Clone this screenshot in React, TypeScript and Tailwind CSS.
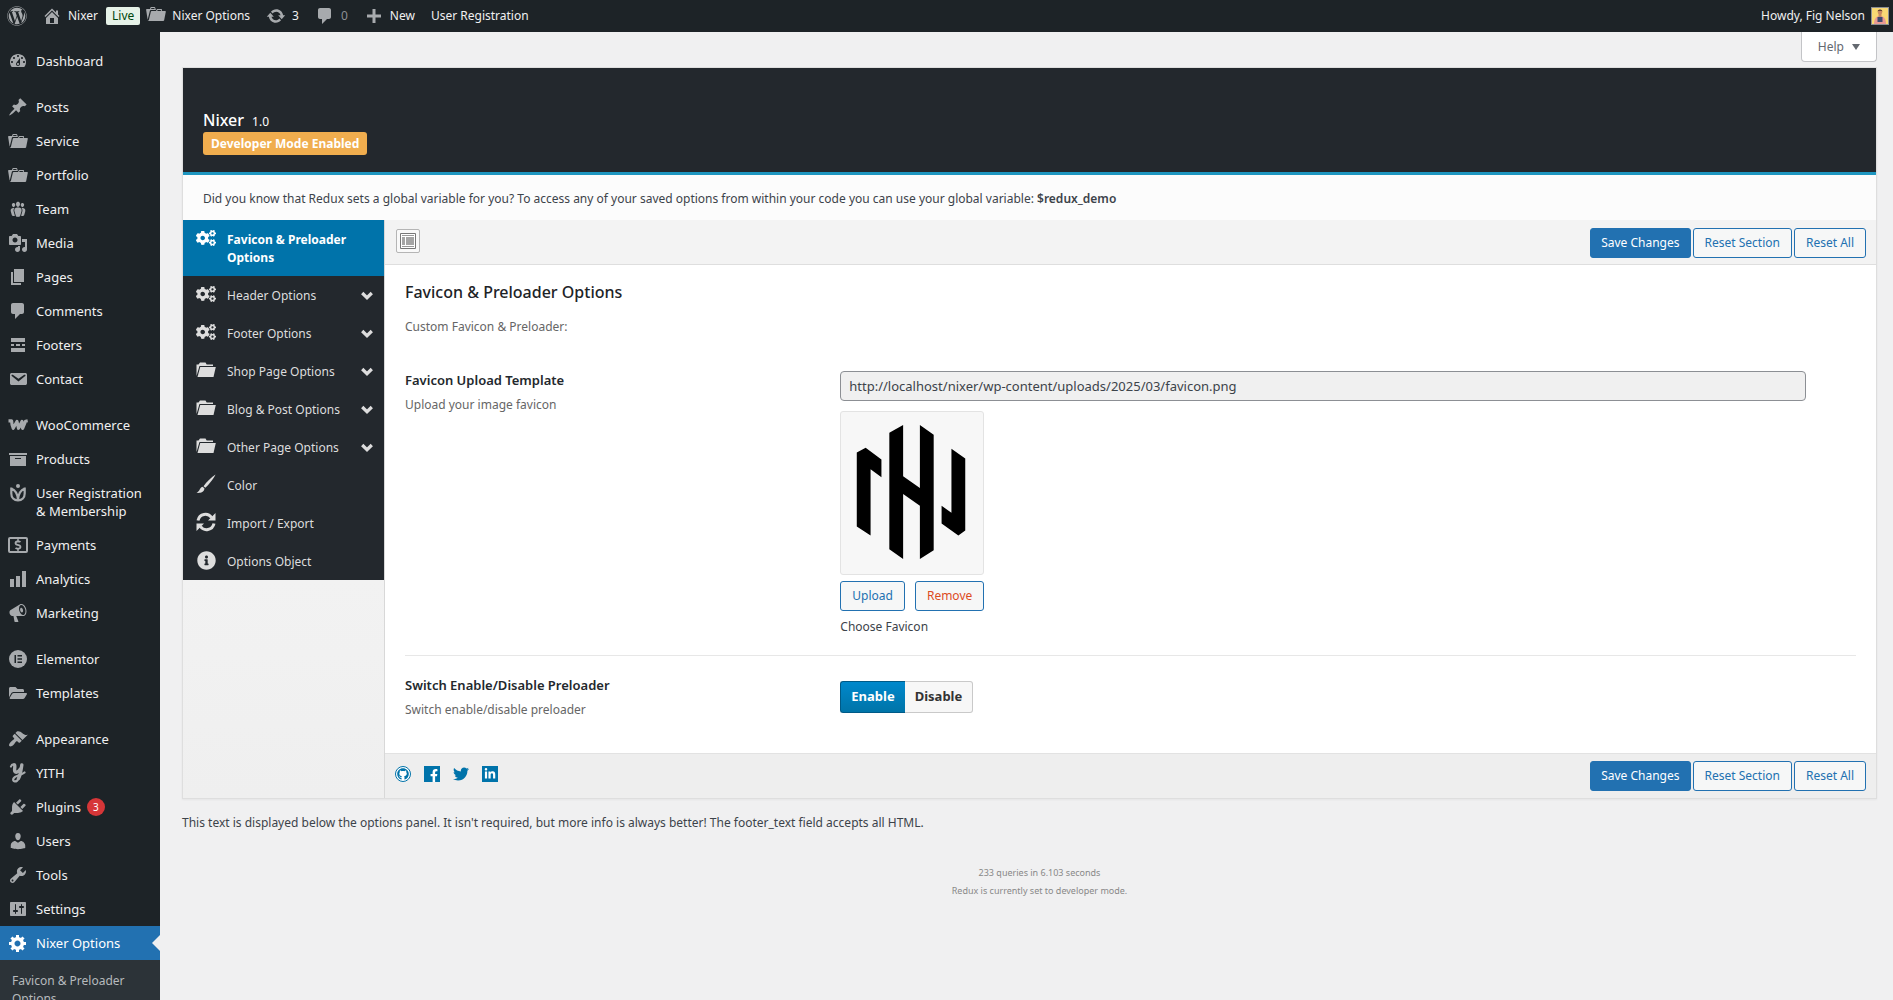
import React, { useState } from "react";
import {
  FaCogs,
  FaDollarSign,
  FaFacebookF,
  FaFolderOpen,
  FaGithub,
  FaInfoCircle,
  FaLinkedinIn,
  FaTwitter,
  FaWordpress,
} from "react-icons/fa";

const paths = {
  home: "M16 8.5l1.53 1.53-1.06 1.06L10 4.6l-6.47 6.49-1.06-1.06L10 2.5l4 4v-2h2v4zm-6-2.46l6 5.99V18H4v-5.97zM12 17v-5H8v5h4z",
  dashboard:
    "M3.76 16h12.48c1.1-1.37 1.76-3.11 1.76-5 0-4.42-3.58-8-8-8s-8 3.58-8 8c0 1.89.66 3.63 1.76 5zM10 4c.55 0 1 .45 1 1s-.45 1-1 1-1-.45-1-1 .45-1 1-1zM6 6c.55 0 1 .45 1 1s-.45 1-1 1-1-.45-1-1 .45-1 1-1zm8 0c.55 0 1 .45 1 1s-.45 1-1 1-1-.45-1-1 .45-1 1-1zm-5.37 5.55L12 7v6c0 1.1-.9 2-2 2s-2-.9-2-2c0-.57.24-1.08.63-1.45zM4 10c.55 0 1 .45 1 1s-.45 1-1 1-1-.45-1-1 .45-1 1-1zm12 0c.55 0 1 .45 1 1s-.45 1-1 1-1-.45-1-1 .45-1 1-1zm-5 3c0-.55-.45-1-1-1s-1 .45-1 1 .45 1 1 1 1-.45 1-1z",
  post: "M10.44 3.02l1.82-1.82 6.36 6.35-1.83 1.82c-1.05-.68-2.48-.57-3.41.36l-.75.75c-.92.93-1.04 2.35-.35 3.41l-1.83 1.82-2.41-2.41-2.8 2.79c-.42.42-3.38 2.71-3.8 2.29s1.86-3.39 2.28-3.81l2.79-2.79L4.1 9.36l1.83-1.82c1.05.69 2.48.57 3.4-.36l.75-.75c.93-.92 1.05-2.35.36-3.41z",
  portfolio:
    "M4 5H.78c-.37 0-.74.32-.69.84l1.56 9.99S3.5 8.47 3.86 6.7c.11-.53.61-.7.98-.7H10s-.7-2.08-.77-2.31C9.11 3.25 8.89 3 8.45 3H5.14c-.36 0-.7.23-.8.64C4.25 4.04 4 5 4 5zm4.88 0h-4s.42-1 .87-1h2.13c.48 0 1 1 1 1zM2.67 16.25c-.31.47-.76.75-1.26.75h15.73c.54 0 .92-.31 1.03-.83.44-2.19 1.68-8.44 1.68-8.44.07-.5-.3-.73-.62-.73H16V5.53c0-.16-.26-.53-.66-.53h-3.76c-.52 0-.87.58-.87.58L10 7H5.59c-.32 0-.63.19-.69.5 0 0-1.59 6.7-1.72 7.33-.07.37-.22.99-.51 1.42zM15.38 7H11s.58-1 1.13-1h2.29c.71 0 .96 1 .96 1z",
  groups:
    "M8.03 4.46c-.29 1.28.55 3.46 1.97 3.46 1.41 0 2.25-2.18 1.96-3.46-.22-.98-1.08-1.63-1.96-1.63-.89 0-1.74.65-1.97 1.63zm-4.13.9c-.25 1.08.47 2.93 1.67 2.93s1.92-1.85 1.67-2.93c-.19-.83-.92-1.39-1.67-1.39s-1.48.56-1.67 1.39zm8.86 0c-.25 1.08.47 2.93 1.66 2.93 1.2 0 1.92-1.85 1.67-2.93-.19-.83-.92-1.39-1.67-1.39-.74 0-1.47.56-1.66 1.39zm-.59 11.43l1.25-4.3C14.2 10 12.71 8.47 10 8.47c-2.72 0-4.21 1.53-3.44 4.02l1.26 4.3C8.05 17.51 9 18 10 18c.98 0 1.94-.49 2.17-1.21zM5.6 9C3.3 9 2.2 10.3 2.8 12.4l1 3.6c.2.6 1 1 1.8 1 .5 0 1 0 1.3-.3l-1.2-4.1C5.3 11.2 5.6 10 6.5 9.1zM14.4 9C16.7 9 17.8 10.3 17.2 12.4l-1 3.6c-.2.6-1 1-1.8 1-.5 0-1 0-1.3-.3l1.2-4.1C14.7 11.2 14.4 10 13.5 9.1z",
  media:
    "M13 11V4c0-.55-.45-1-1-1h-1.67L9 1H5L3.67 3H2c-.55 0-1 .45-1 1v7c0 .55.45 1 1 1h10c.55 0 1-.45 1-1zM7 4.5c1.38 0 2.5 1.12 2.5 2.5S8.38 9.5 7 9.5 4.5 8.38 4.5 7 5.62 4.5 7 4.5zM14 6h5v10.5c0 1.38-1.12 2.5-2.5 2.5S14 17.88 14 16.5s1.12-2.5 2.5-2.5c.17 0 .34.02.5.05V9h-3V6zm-4 8.05V13h2v3.5c0 1.38-1.12 2.5-2.5 2.5S7 17.88 7 16.5 8.12 14 9.5 14c.17 0 .34.02.5.05z",
  page: "M6 15V2h10v13H6zm-1 1h8v2H3V5h2v11z",
  comments:
    "M5 2h9c1.1 0 2 .9 2 2v7c0 1.1-.9 2-2 2h-2l-5 5v-5H5c-1.1 0-2-.9-2-2V4c0-1.1.9-2 2-2z",
  footers:
    "M17 7H3V3h14v4zM6 11H3V9h3v2zm6 0H8V9h4v2zm5 0h-3V9h3v2zm0 6H3v-4h14v4z",
  email:
    "M3.87 4h13.25C18.37 4 19 4.59 19 5.79v8.42c0 1.19-.63 1.79-1.88 1.79H3.87c-1.25 0-1.88-.6-1.88-1.79V5.79c0-1.2.63-1.79 1.88-1.79zm6.62 8.6l6.74-5.53c.24-.2.43-.66.13-1.07-.29-.41-.82-.42-1.17-.17l-5.7 3.86L4.8 5.83c-.35-.25-.88-.24-1.17.17-.3.41-.11.87.13 1.07z",
  archive: "M19 4v2H1V4h18zM2 7h16v10H2V7zm11 3V9H7v1h6z",
  chart: "M18 18V2h-4v16h4zm-6 0V7H8v11h4zm-6 0v-8H2v8h4z",
  megaphone:
    "M18.15 5.94c.46 1.62.38 3.22-.02 4.48-.42 1.28-1.26 2.18-2.3 2.48-.16.06-.26.06-.4.06-.06.02-.12.02-.18.02-.06.02-.14.02-.22.02h-6.8l2.22 5.5c.02.14-.06.26-.14.34-.08.1-.24.16-.34.16H6.95c-.1 0-.26-.06-.34-.16-.08-.08-.16-.2-.14-.34l-1-5.5H4.25l-.02-.02c-.5.06-1.08-.18-1.54-.62s-.88-1.08-1.06-1.88c-.24-.8-.2-1.56-.02-2.2.18-.62.58-1.08 1.06-1.3l.02-.02 9-5.4c.1-.06.18-.1.24-.16.06-.04.14-.08.24-.12.16-.08.28-.12.5-.18 1.04-.3 2.24.1 3.22.98s1.84 2.24 2.26 3.86zm-2.58 5.98h-.02c.4-.1.74-.34 1.04-.7.58-.7.86-1.76.86-3.04 0-.64-.1-1.3-.28-1.98-.34-1.36-1.02-2.5-1.78-3.24s-1.68-1.1-2.46-.88c-.82.22-1.4.96-1.7 2-.32 1.04-.28 2.36.06 3.72.38 1.36 1 2.5 1.8 3.24.78.74 1.62 1.1 2.48.88zm-2.54-7.08c.22-.04.42-.02.62.04.38.16.76.48 1.02 1s.42 1.2.42 1.78c0 .3-.04.56-.12.8-.18.48-.44.84-.86.94-.34.1-.8-.06-1.14-.4s-.64-.86-.78-1.5c-.18-.62-.12-1.24.02-1.72s.48-.84.82-.94z",
  appearance:
    "M14.48 11.06L7.41 3.99l1.5-1.5c.5-.56 2.3-.47 3.51.32 1.21.8 1.43 1.28 2.91 2.1 1.18.64 2.45 1.26 4.45.85zm-.71.71L6.7 4.7 4.93 6.47c-.39.39-.39 1.02 0 1.41l1.06 1.06c.39.39.39 1.03 0 1.42-.6.6-1.43 1.11-2.21 1.69-.35.26-.7.53-1.01.84C1.43 14.23.4 16.08 1.4 17.07c.99 1 2.84-.03 4.18-1.36.31-.31.58-.66.85-1.02.57-.78 1.08-1.61 1.69-2.21.39-.39 1.02-.39 1.41 0l1.06 1.06c.39.39 1.02.39 1.41 0z",
  plugins:
    "M13.11 4.36L9.87 7.6 8 5.73l3.24-3.24c.35-.34 1.05-.2 1.56.32.52.51.66 1.21.31 1.55zm-8 1.77l.91-1.12 9.01 9.01-1.19.84c-.71.71-2.63 1.16-3.82 1.16H6.14L4.9 17.26c-.59.59-1.54.59-2.12 0-.59-.58-.59-1.53 0-2.12l1.24-1.24v-3.88c0-1.13.4-3.19 1.09-3.89zm7.26 3.97l3.24-3.24c.34-.35 1.04-.21 1.55.31.52.51.66 1.21.31 1.55l-3.24 3.25z",
  users:
    "M10 9.25c-2.27 0-2.73-3.44-2.73-3.44C7 4.02 7.82 2 9.97 2c2.16 0 2.98 2.02 2.71 3.81 0 0-.41 3.44-2.68 3.44zm0 2.57L12.72 10c2.39 0 4.52 2.33 4.52 4.53v2.49s-3.65 1.13-7.24 1.13c-3.65 0-7.24-1.13-7.24-1.13v-2.49c0-2.25 1.94-4.48 4.47-4.48z",
  tools:
    "M16.68 9.77c-1.34 1.34-3.3 1.67-4.95.99l-5.41 6.52c-.99.99-2.59.99-3.58 0s-.99-2.59 0-3.57l6.52-5.42c-.68-1.65-.35-3.61.99-4.95 1.28-1.28 3.12-1.62 4.72-1.06l-2.89 2.89 2.82 2.82 2.86-2.87c.53 1.58.18 3.39-1.08 4.65zM3.81 16.21c.4.39 1.04.39 1.43 0 .4-.4.4-1.04 0-1.43-.39-.4-1.03-.4-1.43 0-.39.39-.39 1.03 0 1.43z",
  settings:
    "M18 16V4c0-.55-.45-1-1-1H3c-.55 0-1 .45-1 1v12c0 .55.45 1 1 1h14c.55 0 1-.45 1-1zM8 11h1c.55 0 1 .45 1 1s-.45 1-1 1H8v1.5c0 .28-.22.5-.5.5s-.5-.22-.5-.5V13H6c-.55 0-1-.45-1-1s.45-1 1-1h1V5.5c0-.28.22-.5.5-.5s.5.22.5.5V11zm5-2h-1c-.55 0-1-.45-1-1s.45-1 1-1h1V5.5c0-.28.22-.5.5-.5s.5.22.5.5V7h1c.55 0 1 .45 1 1s-.45 1-1 1h-1v5.5c0 .28-.22.5-.5.5s-.5-.22-.5-.5V9z",
  generic:
    "M18 12h-2.18c-.17.7-.44 1.35-.81 1.93l1.54 1.54-2.1 2.1-1.54-1.54c-.58.36-1.23.63-1.91.79V19H8v-2.18c-.68-.16-1.33-.43-1.91-.79l-1.54 1.54-2.12-2.12 1.54-1.54c-.36-.58-.63-1.23-.79-1.91H1V9.03h2.17c.16-.7.44-1.35.8-1.94L2.43 5.55l2.1-2.1 1.54 1.54c.58-.37 1.24-.64 1.93-.81V2h3v2.18c.68.16 1.33.43 1.91.79l1.54-1.54 2.12 2.12-1.54 1.54c.36.59.64 1.24.8 1.94H18V12zm-8.5 1.5c1.66 0 3-1.34 3-3s-1.34-3-3-3-3 1.34-3 3 1.34 3 3 3z",
  update:
    "M10.2 3.28c3.53 0 6.43 2.61 6.92 6h2.08l-3.5 4-3.5-4h2.32c-.45-1.97-2.21-3.45-4.32-3.45-1.45 0-2.73.71-3.54 1.78L4.95 5.66C6.23 4.2 8.11 3.28 10.2 3.28zm-.4 13.44c-3.52 0-6.43-2.61-6.92-6H.8l3.5-4c1.17 1.33 2.33 2.67 3.5 4H5.48c.45 1.97 2.21 3.45 4.32 3.45 1.45 0 2.73-.71 3.54-1.78l1.71 1.95c-1.28 1.46-3.15 2.38-5.25 2.38z",
  plus: "M17 8.5v3h-5.5v5.5h-3v-5.5H3v-3h5.5V3h3v5.5z",
};

function Dash({ name }: { name: keyof typeof paths }) {
  return (
    <svg viewBox="0 0 20 20" className="size-5 shrink-0" fill="currentColor" aria-hidden="true">
      <path fillRule="evenodd" d={paths[name]} />
    </svg>
  );
}

function WooIcon() {
  return (
    <svg viewBox="0 0 20 20" className="size-5 shrink-0" fill="none" stroke="currentColor" strokeWidth="3.2" strokeLinejoin="round" aria-hidden="true">
      <path d="M.5 5.800H3.600C3.700 9 4.200 11.500 5.200 13.300L9 6.500 10.500 13.300 14 6.500C13.600 9.500 13.900 12 14.600 13.300L17.600 6.200 19.700 5.800" />
    </svg>
  );
}

function MembershipIcon() {
  return (
    <svg viewBox="0 0 20 20" className="size-5 shrink-0" fill="none" stroke="currentColor" strokeWidth="2.2" aria-hidden="true">
      <path d="M3.300 4.500V10.500C3.300 14.500 6 17.300 10 17.300S16.700 14.500 16.700 10.500V4.500M3.300 5.500C7 7 9.500 10 10 16.500 10.500 10 13 7 16.700 5.500" />
      <circle cx="10" cy="3" r="2" fill="currentColor" stroke="none" />
    </svg>
  );
}

function PaymentsIcon() {
  return (
    <span className="flex h-4 w-5 shrink-0 items-center justify-center rounded-[2px] border-2 border-current">
      <FaDollarSign className="size-3" />
    </span>
  );
}

function ElementorIcon() {
  return (
    <svg viewBox="0 0 20 20" className="size-5 shrink-0" aria-hidden="true">
      <circle cx="10" cy="10" r="9" fill="currentColor" />
      <path d="M6.500 6v8h1.500V6zM9.500 6v1.500H14V6zM9.500 9.300v1.400H14V9.300zM9.500 12.500V14H14v-1.500z" fill="#1d2327" />
    </svg>
  );
}

function YithIcon() {
  return (
    <svg viewBox="0 0 20 20" className="size-5 shrink-0" fill="none" stroke="currentColor" strokeLinecap="round" aria-hidden="true">
      <path strokeWidth="3.4" d="M6.500 2C7.500 3.500 6 6.500 6.800 8.300 8 10.300 11 8.500 12.300 6M13.800 2C13 7 12.500 12 10.500 15.500" />
      <path strokeWidth="2.200" d="M6.500 1.500C5 1 3.500 2 3 3.500M10.500 15.500C8.500 20 4 18.800 5.500 15.500 7 12.500 13 12.500 16.500 9.500" />
    </svg>
  );
}

type MenuItem = { label: string; icon: React.ReactNode; badge?: string; active?: boolean };

const menu: MenuItem[][] = [
  [{ label: "Dashboard", icon: <Dash name="dashboard" /> }],
  [
    { label: "Posts", icon: <Dash name="post" /> },
    { label: "Service", icon: <Dash name="portfolio" /> },
    { label: "Portfolio", icon: <Dash name="portfolio" /> },
    { label: "Team", icon: <Dash name="groups" /> },
    { label: "Media", icon: <Dash name="media" /> },
    { label: "Pages", icon: <Dash name="page" /> },
    { label: "Comments", icon: <Dash name="comments" /> },
    { label: "Footers", icon: <Dash name="footers" /> },
    { label: "Contact", icon: <Dash name="email" /> },
  ],
  [
    { label: "WooCommerce", icon: <WooIcon /> },
    { label: "Products", icon: <Dash name="archive" /> },
    { label: "User Registration & Membership", icon: <MembershipIcon /> },
    { label: "Payments", icon: <PaymentsIcon /> },
    { label: "Analytics", icon: <Dash name="chart" /> },
    { label: "Marketing", icon: <Dash name="megaphone" /> },
  ],
  [
    { label: "Elementor", icon: <ElementorIcon /> },
    { label: "Templates", icon: <FaFolderOpen className="size-[18px]" /> },
  ],
  [
    { label: "Appearance", icon: <Dash name="appearance" /> },
    { label: "YITH", icon: <YithIcon /> },
    { label: "Plugins", icon: <Dash name="plugins" />, badge: "3" },
    { label: "Users", icon: <Dash name="users" /> },
    { label: "Tools", icon: <Dash name="tools" /> },
    { label: "Settings", icon: <Dash name="settings" /> },
    { label: "Nixer Options", icon: <Dash name="generic" />, active: true },
  ],
];

function AdminBar() {
  return (
    <header className="flex h-8 shrink-0 items-center justify-between bg-[#1d2327] pr-1 pl-[7px] text-xs text-[#f0f0f1]">
      <nav className="flex items-center" aria-label="Toolbar">
        <a href="#wp" aria-label="About WordPress" className="mr-[15px] text-[#a7aaad]">
          <FaWordpress className="size-5" />
        </a>
        <a href="#site" className="flex items-center gap-[6px]">
          <span className="text-[#a7aaad]"><Dash name="home" /></span>
          Nixer
          <span className="ml-[2px] rounded-[2px] bg-[#e6f2e8] px-[6px] leading-[18px] text-[#00450c]">Live</span>
        </a>
        <a href="#options" className="mr-4 ml-[6px] flex items-center gap-[6px]">
          <span className="-mt-1 text-[#a7aaad]"><Dash name="portfolio" /></span>
          Nixer Options
        </a>
        <a href="#updates" className="mr-4 flex items-center gap-[6px]">
          <span className="text-[#a7aaad]"><Dash name="update" /></span>
          3
        </a>
        <a href="#comments" className="mr-4 flex items-center gap-[6px] text-[#8c8f94]">
          <span className="text-[#a7aaad]"><Dash name="comments" /></span>
          0
        </a>
        <a href="#new" className="mr-4 flex items-center gap-[6px]">
          <span className="text-[#a7aaad]"><Dash name="plus" /></span>
          New
        </a>
        <a href="#registration">User Registration</a>
      </nav>
      <a href="#profile" className="flex items-center gap-[6px]">
        Howdy, Fig Nelson
        <svg viewBox="0 0 16 16" className="size-[18px] border border-[#8c8f94]" aria-hidden="true">
          <rect width="16" height="16" fill="#f8d873" />
          <path d="M2 16c0-5 2-8 6-8s6 3 6 8z" fill="#e99a94" />
          <rect x="6.500" y="5" width="3" height="4" fill="#c98a62" />
          <circle cx="8" cy="4" r="2.300" fill="#c98a62" />
          <path d="M5.600 3.500C5.500.8 10.500.8 10.400 3.500L9.500 2.700H6.500z" fill="#4a2f22" />
          <rect x="5.500" y="9" width="5" height="5" fill="#3f4a70" />
        </svg>
      </a>
    </header>
  );
}

function AdminMenu() {
  return (
    <nav className="w-40 shrink-0 overflow-hidden bg-[#1d2327] pt-3 text-[13px] leading-[18px] text-[#f0f0f1]" aria-label="Main menu">
      <ul className="flex flex-col gap-3">
        {menu.map((group, i) => (
          <li key={i}>
            <ul>
              {group.map((item) => (
                <li key={item.label}>
                  <a
                    href="#menu"
                    className={
                      item.active
                        ? "relative flex items-start bg-[#2271b1] py-2 text-white"
                        : "relative flex items-start py-2"
                    }
                  >
                    <span
                      className={
                        item.active
                          ? "flex h-[18px] w-9 shrink-0 items-center justify-center text-white"
                          : "flex h-[18px] w-9 shrink-0 items-center justify-center text-[#a7aaad]"
                      }
                    >
                      {item.icon}
                    </span>
                    <span className="pr-2">{item.label}</span>
                    {item.badge && (
                      <span className="-ml-[2px] size-[18px] rounded-full bg-[#d63638] text-center text-[10px] text-white">
                        {item.badge}
                      </span>
                    )}
                    {item.active && (
                      <span className="absolute top-[9px] right-0 border-8 border-l-0 border-transparent border-r-[#f0f0f1]" />
                    )}
                  </a>
                </li>
              ))}
            </ul>
          </li>
        ))}
      </ul>
      <div className="bg-[#2c3338] px-3 py-3 text-xs leading-[18px] text-[#b6babd]">
        <a href="#favicon" className="block">Favicon &amp; Preloader Options</a>
      </div>
    </nav>
  );
}

function BrushIcon() {
  return (
    <svg viewBox="0 0 20 20" className="size-5" fill="currentColor" aria-hidden="true">
      <path d="M19.500.5C15 3.500 10.500 8 7.500 12.200l1.800 1.600C13 10.500 17.500 5 19.500.5zM6.700 12.800c-2.200.6-2.500 2.200-3.500 3.700-.7 1-1.500 1.700-2.700 2.300 3.300.4 7.300-.1 8-4.300z" />
    </svg>
  );
}

function RefreshIcon() {
  return (
    <svg viewBox="0 0 20 20" className="size-5" fill="none" stroke="currentColor" strokeWidth="3" aria-hidden="true">
      <path d="M2 8.500C3.500 1.500 12 .5 15.500 5.500M18 11.500C16.500 18.500 8 19.500 4.500 14.500" />
      <path d="M19.500 1v7.500H12zM.5 19v-7.500H8z" fill="currentColor" stroke="none" />
    </svg>
  );
}

function FolderIcon() {
  return (
    <svg viewBox="0 0 20 20" className="size-5" fill="currentColor" aria-hidden="true">
      <path d="M.5 16V4.500h2L4 2.500h5.500l1.200 2H17V6H3.500z" />
      <path d="M4.200 7H19.800L17.500 17H1.500z" />
    </svg>
  );
}

function Chevron() {
  return (
    <svg viewBox="0 0 12 10" className="h-[10px] w-3" fill="none" stroke="currentColor" strokeWidth="3.2" aria-hidden="true">
      <path d="M1.200 2L6 6.700 10.800 2" />
    </svg>
  );
}

const sections = [
  { label: "Header Options", icon: <FaCogs className="size-5" />, more: true },
  { label: "Footer Options", icon: <FaCogs className="size-5" />, more: true },
  { label: "Shop Page Options", icon: <FolderIcon />, more: true },
  { label: "Blog & Post Options", icon: <FolderIcon />, more: true },
  { label: "Other Page Options", icon: <FolderIcon />, more: true },
  { label: "Color", icon: <BrushIcon /> },
  { label: "Import / Export", icon: <RefreshIcon /> },
  { label: "Options Object", icon: <FaInfoCircle className="size-[19px]" /> },
];

function SectionNav() {
  return (
    <nav className="w-[202px] shrink-0 border-r border-[#d8d8d8] bg-linear-to-b from-[#f7f7f7] to-[#efefef] text-xs leading-[18px]" aria-label="Sections">
      <ul className="bg-[#23282d] text-[#dddddd]">
        <li>
          <a href="#favicon" className="flex bg-[#0073aa] pt-[11px] pr-4 pb-[9px] pl-[13px] font-bold text-white">
            <FaCogs className="-mt-[3px] mr-[11px] size-5 shrink-0" />
            <span>Favicon &amp; Preloader Options</span>
          </a>
        </li>
        {sections.map((s) => (
          <li key={s.label}>
            <a href="#section" className="flex items-start pt-[11px] pr-[11px] pb-[9px] pl-[13px]">
              <span className="-mt-[3px] -mb-1 mr-[11px] flex size-5 items-center justify-center">{s.icon}</span>
              <span className="flex-1">{s.label}</span>
              {s.more && <span className="pt-[4px]"><Chevron /></span>}
            </a>
          </li>
        ))}
      </ul>
    </nav>
  );
}

const outlineButton =
  "h-[30px] rounded-[3px] border border-[#2271b1] bg-[#f6f7f7] px-[11px] text-xs text-[#2271b1]";

function ActionButtons() {
  return (
    <div className="flex gap-[2px]">
      <button type="button" className="h-[30px] rounded-[3px] border border-[#2271b1] bg-[#2271b1] px-[10px] text-xs text-white">
        Save Changes
      </button>
      <button type="button" className={outlineButton}>Reset Section</button>
      <button type="button" className={outlineButton}>Reset All</button>
    </div>
  );
}

function FaviconPreview() {
  return (
    <svg viewBox="0 0 144 164" className="h-[164px] w-[144px] rounded-[3px] border border-[#e3e3e3] bg-[#f7f7f7]" role="img" aria-label="Favicon preview">
      <path d="M16 41l9-5 16 12v18L30 58v67l-14-9z" />
      <path d="M49 21l14-8v52l17 12V13l14 10v117l-14 9V95L63 83v66l-14-10z" />
      <path d="M112 37l14 10v73l-7 5-17-12V95l10 7z" />
    </svg>
  );
}

function Field({ title, hint, children }: { title: string; hint: string; children: React.ReactNode }) {
  return (
    <div className="grid grid-cols-[30%_1fr]">
      <div>
        <h3 className="text-[13px] leading-[18px] font-semibold text-[#23282d]">{title}</h3>
        <p className="mt-[6px] text-xs leading-5 text-[#666666]">{hint}</p>
      </div>
      <div>{children}</div>
    </div>
  );
}

export default function App() {
  const [enabled, setEnabled] = useState(true);
  return (
    <div className="flex h-screen flex-col overflow-hidden bg-[#f0f0f1] font-['Noto_Sans',sans-serif] text-xs text-[#3c434a]">
      <AdminBar />
      <div className="flex min-h-0 flex-1">
        <AdminMenu />
        <main className="min-w-0 flex-1 overflow-auto pr-4 pl-[22px]">
          <div className="mb-[5px] flex justify-end">
            <button type="button" className="flex h-[30px] items-center gap-2 rounded-b-[4px] border border-t-0 border-[#c3c4c7] bg-white px-4 text-xs text-[#646970]">
              Help
              <svg viewBox="0 0 8 6" className="h-[6px] w-2" fill="currentColor" aria-hidden="true">
                <path d="M0 0h8L4 6z" />
              </svg>
            </button>
          </div>

          <section className="border border-[#dedede] bg-[#fcfcfc] shadow-xs">
            <div className="border-b-[3px] border-[#1e96c0] bg-[#23282d] pt-[42px] pb-[17px] pl-5 text-white">
              <h1 className="mb-[2px] flex items-baseline gap-2 text-base leading-5 font-medium">
                Nixer <span className="text-xs font-normal">1.0</span>
              </h1>
              <span className="inline-flex h-[23px] items-center rounded-[3px] bg-[#f0ad4e] px-2 align-top text-xs font-bold">
                Developer Mode Enabled
              </span>
            </div>

            <p className="pt-[15px] pb-[13px] pl-5 leading-[17px]">
              Did you know that Redux sets a global variable for you? To access any of your saved options from within your code you can use your global variable:{" "}
              <strong className="font-semibold">$redux_demo</strong>
            </p>

            <div className="flex">
              <SectionNav />
              <div className="min-w-0 flex-1">
                <div className="flex h-[45px] items-center justify-between border-b border-[#dedede] bg-[#f3f3f3] pt-[2px] pr-[10px] pl-[11px]">
                  <button type="button" aria-label="Expand options" className="mb-1 flex size-6 items-center justify-center rounded-[2px] border border-[#b5b5b5] bg-[#f9f9f9]">
                    <svg viewBox="0 0 16 16" className="size-4" fill="none" aria-hidden="true">
                      <path d="M.5.5h15v15H.5z" stroke="#777777" fill="#fff" />
                      <path d="M2 2.500h12M2 13.500h12" stroke="#999999" />
                      <path d="M2 4h3v8H2zM6 4h8v8H6z" fill="#a5a5a5" />
                    </svg>
                  </button>
                  <ActionButtons />
                </div>

                <form className="bg-white px-5 pt-[15px] pb-[33px]" onSubmit={(e) => e.preventDefault()}>
                  <h2 className="text-base leading-6 font-medium text-[#1d2327]">Favicon &amp; Preloader Options</h2>
                  <p className="mt-[13px] mb-[34px] leading-5 text-[#666666]">Custom Favicon &amp; Preloader:</p>

                  <Field title="Favicon Upload Template" hint="Upload your image favicon">
                    <div className="flex flex-col items-start pr-[50px]">
                      <input
                        type="text"
                        readOnly
                        aria-label="Favicon Upload Template"
                        value="http://localhost/nixer/wp-content/uploads/2025/03/favicon.png"
                        className="h-[30px] w-full rounded-[4px] border border-[#8c8f94] bg-[#f0f0f0] px-2 text-[13px] text-[#3c434a] outline-none"
                      />
                      <div className="mt-[10px]"><FaviconPreview /></div>
                      <div className="mt-[6px] flex gap-[10px]">
                        <button type="button" className={outlineButton}>Upload</button>
                        <button type="button" className="h-[30px] rounded-[3px] border border-[#2271b1] bg-[#f6f7f7] px-[11px] text-xs text-[#dd4b1f]">
                          Remove
                        </button>
                      </div>
                      <p className="mt-[6px] leading-5">Choose Favicon</p>
                    </div>
                  </Field>

                  <hr className="mt-[18px] mb-5 border-[#e7e7e7]" />

                  <Field title="Switch Enable/Disable Preloader" hint="Switch enable/disable preloader">
                    <div className="flex py-[5px] text-[13px] font-bold">
                      <button
                        type="button"
                        aria-pressed={enabled}
                        onClick={() => setEnabled(true)}
                        className={
                          enabled
                            ? "h-8 rounded-l-[3px] border border-r-0 border-[#005a87] bg-linear-to-b from-[#0088cc] to-[#0074a8] px-[10px] text-white"
                            : "h-8 rounded-l-[3px] border border-r-0 border-[#c3c4c7] bg-[#f7f7f7] px-[10px] text-[#333333]"
                        }
                      >
                        Enable
                      </button>
                      <button
                        type="button"
                        aria-pressed={!enabled}
                        onClick={() => setEnabled(false)}
                        className={
                          enabled
                            ? "h-8 rounded-r-[3px] border border-l-0 border-[#c9c9c9] bg-[#f7f7f7] px-[10px] text-[#333333]"
                            : "h-8 rounded-r-[3px] border border-l-0 border-[#005a87] bg-linear-to-b from-[#0088cc] to-[#0074a8] px-[10px] text-white"
                        }
                      >
                        Disable
                      </button>
                    </div>
                  </Field>
                </form>

                <div className="flex h-[45px] items-center justify-between border-t border-[#e2e2e2] bg-[#eeeeee] pr-[10px] pl-[10px]">
                  <div className="flex gap-[13px] pb-1 text-[#0073aa]">
                    <a href="#github" aria-label="GitHub" className="flex size-4 items-center justify-center rounded-full border border-current bg-white">
                      <FaGithub className="size-3" />
                    </a>
                    <a href="#facebook" aria-label="Facebook" className="flex size-4 items-end justify-end bg-[#0073aa] pr-[2px] text-white">
                      <FaFacebookF className="h-[13px] w-2" />
                    </a>
                    <a href="#twitter" aria-label="Twitter"><FaTwitter className="size-4" /></a>
                    <a href="#linkedin" aria-label="LinkedIn" className="flex size-4 items-center justify-center bg-[#0073aa] text-white">
                      <FaLinkedinIn className="size-3" />
                    </a>
                  </div>
                  <ActionButtons />
                </div>
              </div>
            </div>
          </section>

          <p className="mt-[14px] leading-5">
            This text is displayed below the options panel. It isn&apos;t required, but more info is always better! The footer_text field accepts all HTML.
          </p>
          <footer className="mt-[31px] pl-5 text-center text-[9px] leading-[18px] text-[#888888]">
            <p>233 queries in 6.103 seconds</p>
            <p>Redux is currently set to developer mode.</p>
          </footer>
        </main>
      </div>
    </div>
  );
}
